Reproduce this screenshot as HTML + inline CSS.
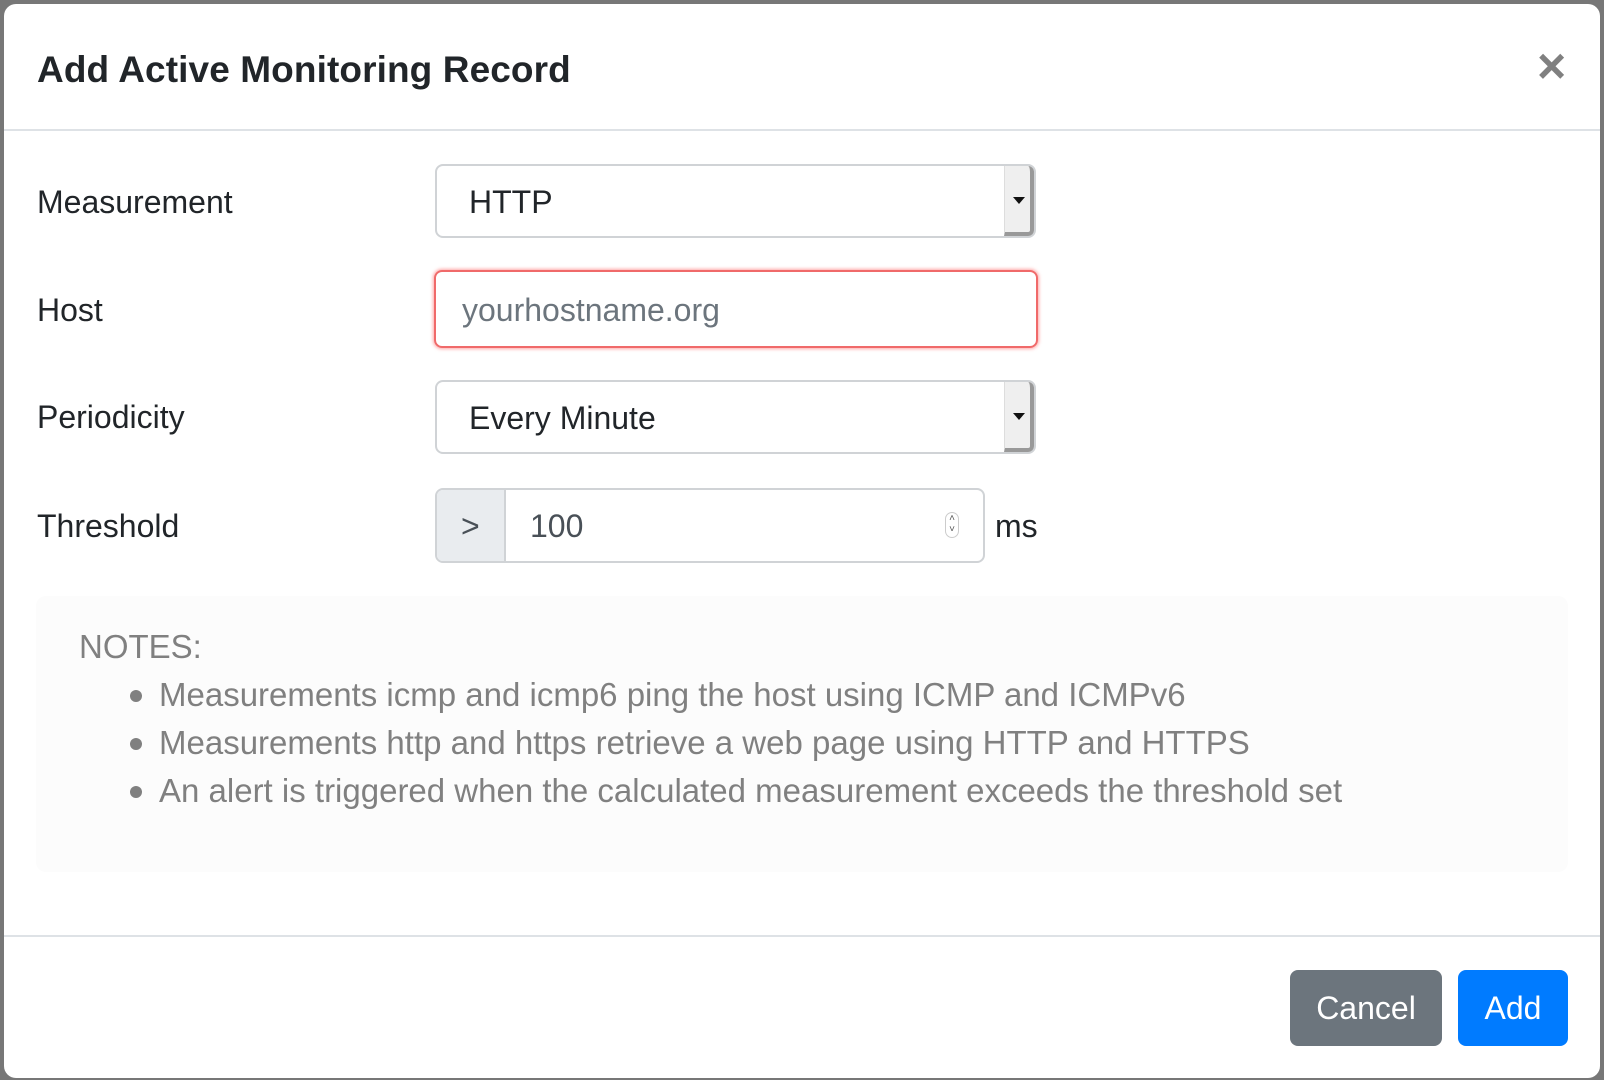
<!DOCTYPE html>
<html><head><meta charset="utf-8"><style>
*{box-sizing:border-box;margin:0;padding:0}
body{width:1604px;height:1080px;background:#777;font-family:"Liberation Sans",Arial,sans-serif;position:relative;overflow:hidden;color:#212529}
.m{position:absolute;left:4px;top:4px;width:1596px;height:1074px;background:#fff;border-radius:12px}
.a{position:absolute;white-space:nowrap}
.lbl{font-size:32px;line-height:40px}
.sel{position:absolute;left:431px;width:601px;height:74px;border:2px solid #d0d3d6;border-radius:8px;background:#fff;font-size:32px}
.sel span{position:absolute;left:32px;top:18px}
.sel .ar{position:absolute;right:0;top:0;width:30px;height:70px;background:#efefef;border-left:1px solid #ddd;border-right:4px solid #999;border-bottom:4px solid #999;border-radius:0 6px 6px 0}
.sel .ar:after{content:"";position:absolute;left:8px;top:31px;border-left:6px solid transparent;border-right:6px solid transparent;border-top:7px solid #111}
.n{font-size:33px;color:#808080}
</style></head><body>
<div class="m">
 <div class="a" style="left:33px;top:44px;font-size:37px;font-weight:bold;line-height:44px;color:#212529;letter-spacing:0.1px">Add Active Monitoring Record</div>
 <div class="a" style="left:1533px;top:40px;font-size:50px;font-weight:bold;color:#808080;line-height:44px">×</div>
 <div class="a" style="left:0;top:125px;width:1596px;height:2px;background:#dee2e6"></div>

 <div class="a lbl" style="left:33px;top:178px">Measurement</div>
 <div class="sel" style="top:160px"><span>HTTP</span><div class="ar"></div></div>

 <div class="a lbl" style="left:33px;top:286px">Host</div>
 <div class="a" style="left:430px;top:266px;width:604px;height:78px;border:2px solid #f06a6a;border-radius:8px;box-shadow:0 0 3px 1px rgba(255,80,80,.5);font-size:32px;color:#6c757d"><span style="position:absolute;left:26px;top:20px">yourhostname.org</span></div>

 <div class="a lbl" style="left:33px;top:393px">Periodicity</div>
 <div class="sel" style="top:376px"><span>Every Minute</span><div class="ar"></div></div>

 <div class="a lbl" style="left:33px;top:502px">Threshold</div>
 <div class="a" style="left:431px;top:484px;width:550px;height:75px;border:2px solid #d0d3d6;border-radius:8px;overflow:hidden;font-size:32px">
  <div style="position:absolute;left:0;top:0;width:69px;height:71px;background:#e9ecef;border-right:2px solid #d0d3d6"><span style="position:absolute;left:24px;top:18px;color:#495057">&gt;</span></div>
  <span style="position:absolute;left:93px;top:18px;color:#495057">100</span>
  <div style="position:absolute;left:508px;top:22px;width:14px;height:26px;border:1px solid #ccc;border-radius:7px;font-size:10px;line-height:11px;text-align:center;color:#555">˄<br>˅</div>
 </div>
 <div class="a lbl" style="left:991px;top:502px">ms</div>

 <div class="a" style="left:32px;top:592px;width:1532px;height:276px;background:#fcfcfc;border-radius:10px"></div>
 <div class="a n" style="left:75px;top:623px;line-height:40px">NOTES:</div>
 <div class="a" style="left:126px;top:686px;width:12px;height:12px;border-radius:50%;background:#808080"></div>
 <div class="a" style="left:126px;top:734px;width:12px;height:12px;border-radius:50%;background:#808080"></div>
 <div class="a" style="left:126px;top:782px;width:12px;height:12px;border-radius:50%;background:#808080"></div>
 <div class="a n" style="left:155px;top:671px;line-height:40px">Measurements icmp and icmp6 ping the host using ICMP and ICMPv6</div>
 <div class="a n" style="left:155px;top:719px;line-height:40px">Measurements http and https retrieve a web page using HTTP and HTTPS</div>
 <div class="a n" style="left:155px;top:767px;line-height:40px">An alert is triggered when the calculated measurement exceeds the threshold set</div>

 <div class="a" style="left:0;top:931px;width:1596px;height:2px;background:#dee2e6"></div>
 <div class="a" style="left:1286px;top:966px;width:152px;height:76px;background:#6c757d;border-radius:8px;color:#fff;font-size:32px;text-align:center;line-height:76px">Cancel</div>
 <div class="a" style="left:1454px;top:966px;width:110px;height:76px;background:#007bff;border-radius:8px;color:#fff;font-size:32px;text-align:center;line-height:76px">Add</div>
</div>
</body></html>
